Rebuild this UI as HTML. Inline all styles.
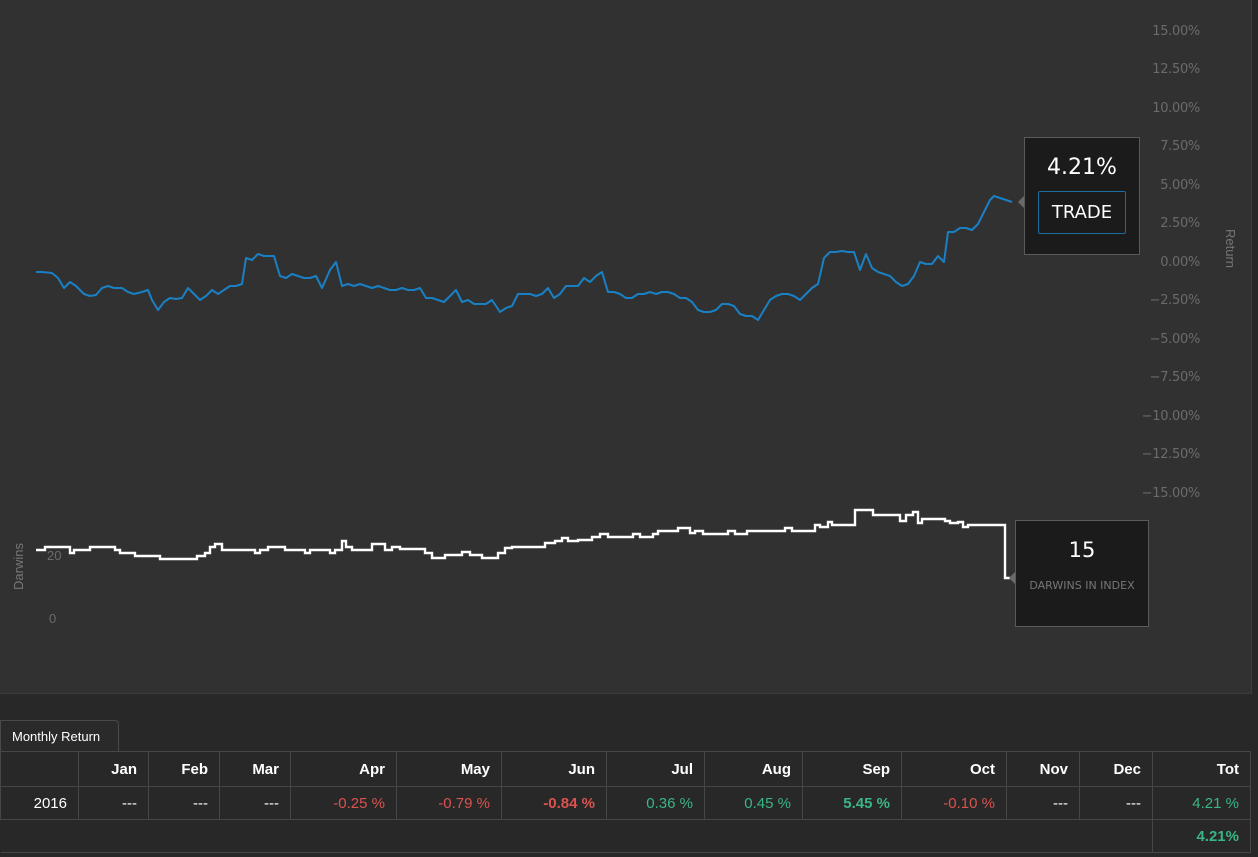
<!DOCTYPE html>
<html><head><meta charset="utf-8"><style>
*{margin:0;padding:0;box-sizing:border-box}
body{width:1258px;height:857px;background:#282828;font-family:"Liberation Sans",sans-serif;position:relative;overflow:hidden}
#panel{position:absolute;left:0;top:0;width:1252px;height:694px;background:#313131;border-right:1px solid #3c3c3c;border-bottom:1px solid #3c3c3c}
.yl{position:absolute;right:51px;font-size:13px;color:#6b6b6b;font-family:"DejaVu Sans","Liberation Sans",sans-serif;letter-spacing:-0.3px}
.tip{position:absolute;background:#1b1b1b;border:1px solid #5a5a5a;text-align:center;color:#fff;font-family:"DejaVu Sans",sans-serif}
table{position:absolute;left:0;top:751px;width:1251px;border-collapse:collapse;font-size:15px;color:#fff}
td{border:1px solid #464646;text-align:right;padding:0 11px;height:33px}
tr.h td{font-weight:bold;height:35px}
.r{color:#d9534f}.g{color:#3ab585}
</style></head><body>
<div id="panel">
<div class="yl" style="top:24px">15.00%</div>
<div class="yl" style="top:62px">12.50%</div>
<div class="yl" style="top:101px">10.00%</div>
<div class="yl" style="top:139px">7.50%</div>
<div class="yl" style="top:178px">5.00%</div>
<div class="yl" style="top:216px">2.50%</div>
<div class="yl" style="top:255px">0.00%</div>
<div class="yl" style="top:293px">−2.50%</div>
<div class="yl" style="top:332px">−5.00%</div>
<div class="yl" style="top:370px">−7.50%</div>
<div class="yl" style="top:409px">−10.00%</div>
<div class="yl" style="top:447px">−12.50%</div>
<div class="yl" style="top:486px">−15.00%</div>
<div style="position:absolute;top:229px;transform:rotate(90deg);transform-origin:left top;left:1238px;font-size:13px;color:#777">Return</div>
<div style="position:absolute;left:11px;top:590px;transform:rotate(-90deg);transform-origin:left top;font-size:13px;color:#777">Darwins</div>
<div style="position:absolute;left:47px;top:548px;font-size:13px;color:#6b6b6b">20</div>
<div style="position:absolute;left:49px;top:611px;font-size:13px;color:#6b6b6b">0</div>
<svg width="1252" height="694" style="position:absolute;left:0;top:0">
<polyline fill="none" stroke="#1a80c4" stroke-width="2" stroke-linejoin="round" points="36,272 42,272 52,273 58,278 64,288 70,282 76,286 84,294 90,296 96,295 102,288 108,286 114,288 122,288 128,292 134,294 142,292 148,290 152,300 158,310 164,302 170,298 176,299 182,298 188,288 194,294 200,300 206,296 212,290 218,294 224,290 230,286 236,286 242,284 246,258 252,260 258,254 264,256 270,256 274,256 280,276 286,278 292,274 298,276 304,278 310,278 316,276 322,288 330,270 336,262 342,286 348,284 354,286 360,284 366,286 372,288 378,286 384,288 390,290 396,290 402,288 408,290 414,290 420,288 426,298 432,298 438,300 444,302 450,296 456,290 462,302 468,300 474,304 480,304 486,304 492,300 500,312 506,308 512,306 518,294 524,294 530,294 536,296 542,294 548,288 554,298 560,294 566,286 572,286 578,286 584,278 590,282 596,276 602,272 608,292 614,292 620,294 626,298 632,298 638,294 644,294 650,292 656,294 662,292 668,292 674,294 680,298 686,298 692,302 698,310 704,312 710,312 716,310 722,304 728,304 734,306 740,314 746,316 752,316 758,320 764,310 770,300 776,296 782,294 788,294 794,296 800,300 806,294 812,288 818,284 824,258 830,252 836,252 842,251 848,252 854,252 860,270 866,254 872,268 878,272 884,274 890,276 896,282 902,286 908,284 914,276 920,262 926,264 932,264 938,256 944,262 948,232 954,232 960,228 966,228 972,230 978,224 984,212 990,200 994,196 1000,198 1006,200 1012,202"/>
<path fill="none" stroke="#fff" stroke-width="2.4" d="M36,550H45V547H70V553H74V550H90V547H115V550H120V553H135V556H160V559H197V556H205V553H210V547H215V544H222V550H255V553H260V550H268V547H285V550H305V553H310V550H330V553H335V550H342V541H346V547H352V550H372V544H385V550H392V547H400V549H425V553H432V558H445V555H462V552H470V555H482V558H498V553H505V548H512V547H545V543H555V541H562V538H568V541H578V540H592V537H600V534H608V537H633V534H640V537H653V534H658V531H678V528H690V533H695V531H703V534H728V531H735V534H747V531H785V528H792V531H815V525H820V527H828V522H832V525H855V510H873V515H900V521H906V515H913V512H918V523H922V519H945V521H950V523H958V522H963V527H968V525H1005V578H1010"/>
<polygon points="1018,202 1024,196 1024,208" fill="#6a6a6a"/>
<polygon points="1009,578 1015,572 1015,584" fill="#6a6a6a"/>
</svg>
<div class="tip" style="left:1024px;top:137px;width:116px;height:118px">
<div style="font-size:22px;margin-top:17px">4.21%</div>
<div style="margin:11px auto 0;width:88px;height:43px;border:1px solid #1a6fa0;border-radius:2px;font-size:18px;line-height:41px">TRADE</div>
</div>
<div class="tip" style="left:1015px;top:520px;width:134px;height:107px">
<div style="font-size:21px;margin-top:17px">15</div>
<div style="font-size:11px;color:#777;margin-top:17px">DARWINS IN INDEX</div>
</div>
</div>
<div style="position:absolute;left:0;top:720px;width:119px;height:32px;background:#2a2a2a;border:1px solid #4a4a4a;border-bottom:none;border-radius:0 4px 0 0;color:#fff;font-size:13px;line-height:31px;padding-left:11px">Monthly Return</div>
<table>
<tr class="h"><td style="width:78px"></td><td style="width:70px">Jan</td><td style="width:71px">Feb</td><td style="width:71px">Mar</td><td style="width:106px">Apr</td><td style="width:105px">May</td><td style="width:105px">Jun</td><td style="width:98px">Jul</td><td style="width:98px">Aug</td><td style="width:99px">Sep</td><td style="width:105px">Oct</td><td style="width:73px">Nov</td><td style="width:73px">Dec</td><td>Tot</td></tr>
<tr><td>2016</td><td>---</td><td>---</td><td>---</td><td class="r">-0.25 %</td><td class="r">-0.79 %</td><td class="r" style="font-weight:bold">-0.84 %</td><td class="g">0.36 %</td><td class="g">0.45 %</td><td class="g" style="font-weight:bold">5.45 %</td><td class="r">-0.10 %</td><td>---</td><td>---</td><td class="g">4.21 %</td></tr>
<tr><td colspan="13" style="border-right:1px solid #464646;border-left:none"></td><td class="g" style="font-weight:bold">4.21%</td></tr>
</table>
</body></html>
